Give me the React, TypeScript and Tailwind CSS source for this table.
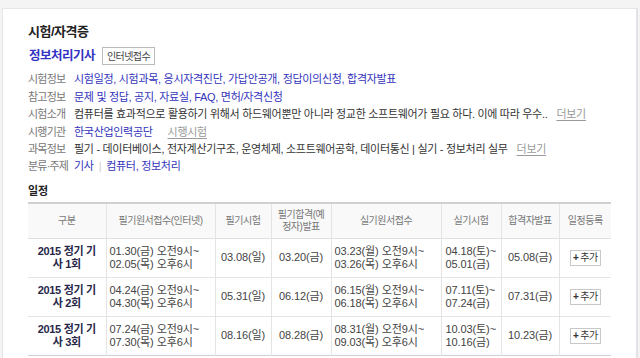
import React from "react";

const FONT = { fontFamily: '"Liberation Sans", "Noto Sans CJK KR", sans-serif' };

type Row = { name: [string, string]; wApply: [string, string]; wExam: string; wPass: string; pApply: [string, string]; pExam: [string, string]; pass: string };

const rows: Row[] = [
  { name: ["2015 정기 기", "사 1회"], wApply: ["01.30(금) 오전9시~", "02.05(목) 오후6시"], wExam: "03.08(일)", wPass: "03.20(금)", pApply: ["03.23(월) 오전9시~", "03.26(목) 오후6시"], pExam: ["04.18(토)~", "05.01(금)"], pass: "05.08(금)" },
  { name: ["2015 정기 기", "사 2회"], wApply: ["04.24(금) 오전9시~", "04.30(목) 오후6시"], wExam: "05.31(일)", wPass: "06.12(금)", pApply: ["06.15(월) 오전9시~", "06.18(목) 오후6시"], pExam: ["07.11(토)~", "07.24(금)"], pass: "07.31(금)" },
  { name: ["2015 정기 기", "사 3회"], wApply: ["07.24(금) 오전9시~", "07.30(목) 오후6시"], wExam: "08.16(일)", wPass: "08.28(금)", pApply: ["08.31(월) 오전9시~", "09.03(목) 오후6시"], pExam: ["10.03(토)~", "10.16(금)"], pass: "10.23(금)" },
];

function InfoRow({ label, children }: { label: string; children: React.ReactNode }) {
  return (
    <div className="flex items-center h-[17.4px] whitespace-nowrap">
      <span className="w-[46px] text-[#777] tracking-[-0.8px]">{label}</span>
      <div className="flex items-center">{children}</div>
    </div>
  );
}

function Link({ children }: { children: React.ReactNode }) {
  return <span className="text-[#3333bb]">{children}</span>;
}

function More({ label = "더보기", className = "" }: { label?: string; className?: string }) {
  return <span className={`text-[#999] underline underline-offset-2 ${className}`}>{label}</span>;
}

export default function App() {
  const th = "font-normal text-[#777] text-[10px] border-r border-[#e4e4e4] last:border-r-0 leading-[12px]";
  const td = "border-r border-[#e4e4e4] last:border-r-0 text-center text-[#444] leading-[13px]";
  return (
    <div className="w-[640px] h-[358px] bg-[#f4f4f5] pt-[8px] overflow-hidden" style={FONT}>
      <div className="ml-[2px] w-[636px] h-[360px] bg-white border-t border-l border-[#e6e6e6] border-r-2 border-r-[#e2e2e8] pl-[25px] pt-[15px]">
        <h1 className="text-[13px] font-bold text-[#222] tracking-[-0.5px] leading-[16px]">시험/자격증</h1>
        <div className="flex items-center mt-[7px] h-[18px]">
          <span className="text-[12.5px] font-bold text-[#3434c4] tracking-[-0.5px] ml-[1px]">정보처리기사</span>
          <span className="ml-[7px] h-[18px] w-[53px] flex items-center justify-center border border-[#bbb] text-[10px] text-[#444] tracking-[-0.6px]">인터넷접수</span>
        </div>
        <div className="mt-[6px] text-[11px] tracking-[-0.3px]">
          <InfoRow label="시험정보">
            <Link>시험일정, 시험과목, 응시자격진단, 가답안공개, 정답이의신청, 합격자발표</Link>
          </InfoRow>
          <InfoRow label="참고정보">
            <Link>문제 및 정답, 공지, 자료실, FAQ, 면허/자격신청</Link>
          </InfoRow>
          <InfoRow label="시험소개">
            <span className="text-[#333]">컴퓨터를 효과적으로 활용하기 위해서 하드웨어뿐만 아니라 정교한 소프트웨어가 필요 하다. 이에 따라 우수..</span>
            <More className="ml-[9px]" />
          </InfoRow>
          <InfoRow label="시행기관">
            <Link>한국산업인력공단</Link>
            <More label="시행시험" className="ml-[15px]" />
          </InfoRow>
          <InfoRow label="과목정보">
            <span className="text-[#333]">필기 - 데이터베이스, 전자계산기구조, 운영체제, 소프트웨어공학, 데이터통신 | 실기 - 정보처리 실무</span>
            <More className="ml-[9px]" />
          </InfoRow>
          <InfoRow label="분류·주제">
            <Link>기사</Link>
            <span className="mx-[5px] text-[#ccc]">|</span>
            <Link>컴퓨터, 정보처리</Link>
          </InfoRow>
        </div>
        <h2 className="mt-[9px] text-[11px] font-bold text-[#222] leading-[14px]">일정</h2>
        <table className="mt-[4px] w-[583px] table-fixed border-collapse border-t-2 border-[#d0d0d0]">
          <colgroup>
            <col className="w-[78px]" />
            <col className="w-[109px]" />
            <col className="w-[56px]" />
            <col className="w-[60px]" />
            <col className="w-[110px]" />
            <col className="w-[60px]" />
            <col className="w-[58px]" />
            <col className="w-[52px]" />
          </colgroup>
          <thead className="tracking-[-0.5px]">
            <tr className="h-[35px] bg-[#f9f9f9] border-b border-[#e0e0e0]">
              <th className={th}>구분</th>
              <th className={th}>필기원서접수(인터넷)</th>
              <th className={th}>필기시험</th>
              <th className={th}>필기합격(예<br />정자)발표</th>
              <th className={th}>실기원서접수</th>
              <th className={th}>실기시험</th>
              <th className={th}>합격자발표</th>
              <th className={th}>일정등록</th>
            </tr>
          </thead>
          <tbody className="text-[11px] tracking-[-0.1px]">
            {rows.map((r, i) => (
              <tr key={i} className={`h-[39px] border-b ${i === rows.length - 1 ? "border-[#cfcfcf]" : "border-[#e4e4e4]"}`}>
                <td className={`${td} font-bold text-[#27274a] tracking-[-0.3px]`}>{r.name[0]}<br />{r.name[1]}</td>
                <td className={`${td} text-left pl-[3px] whitespace-nowrap`}>{r.wApply[0]}<br />{r.wApply[1]}</td>
                <td className={td}>{r.wExam}</td>
                <td className={td}>{r.wPass}</td>
                <td className={`${td} text-left pl-[3px] whitespace-nowrap`}>{r.pApply[0]}<br />{r.pApply[1]}</td>
                <td className={`${td} text-left pl-[4px] whitespace-nowrap`}>{r.pExam[0]}<br />{r.pExam[1]}</td>
                <td className={td}>{r.pass}</td>
                <td className={td}>
                  <span className="inline-flex items-center justify-center w-[31px] h-[16px] border border-[#c8c8c8] text-[10px] text-[#333] tracking-[-0.5px]">
                    <b className="mr-[2px]">+</b>추가
                  </span>
                </td>
              </tr>
            ))}
          </tbody>
        </table>
      </div>
    </div>
  );
}
